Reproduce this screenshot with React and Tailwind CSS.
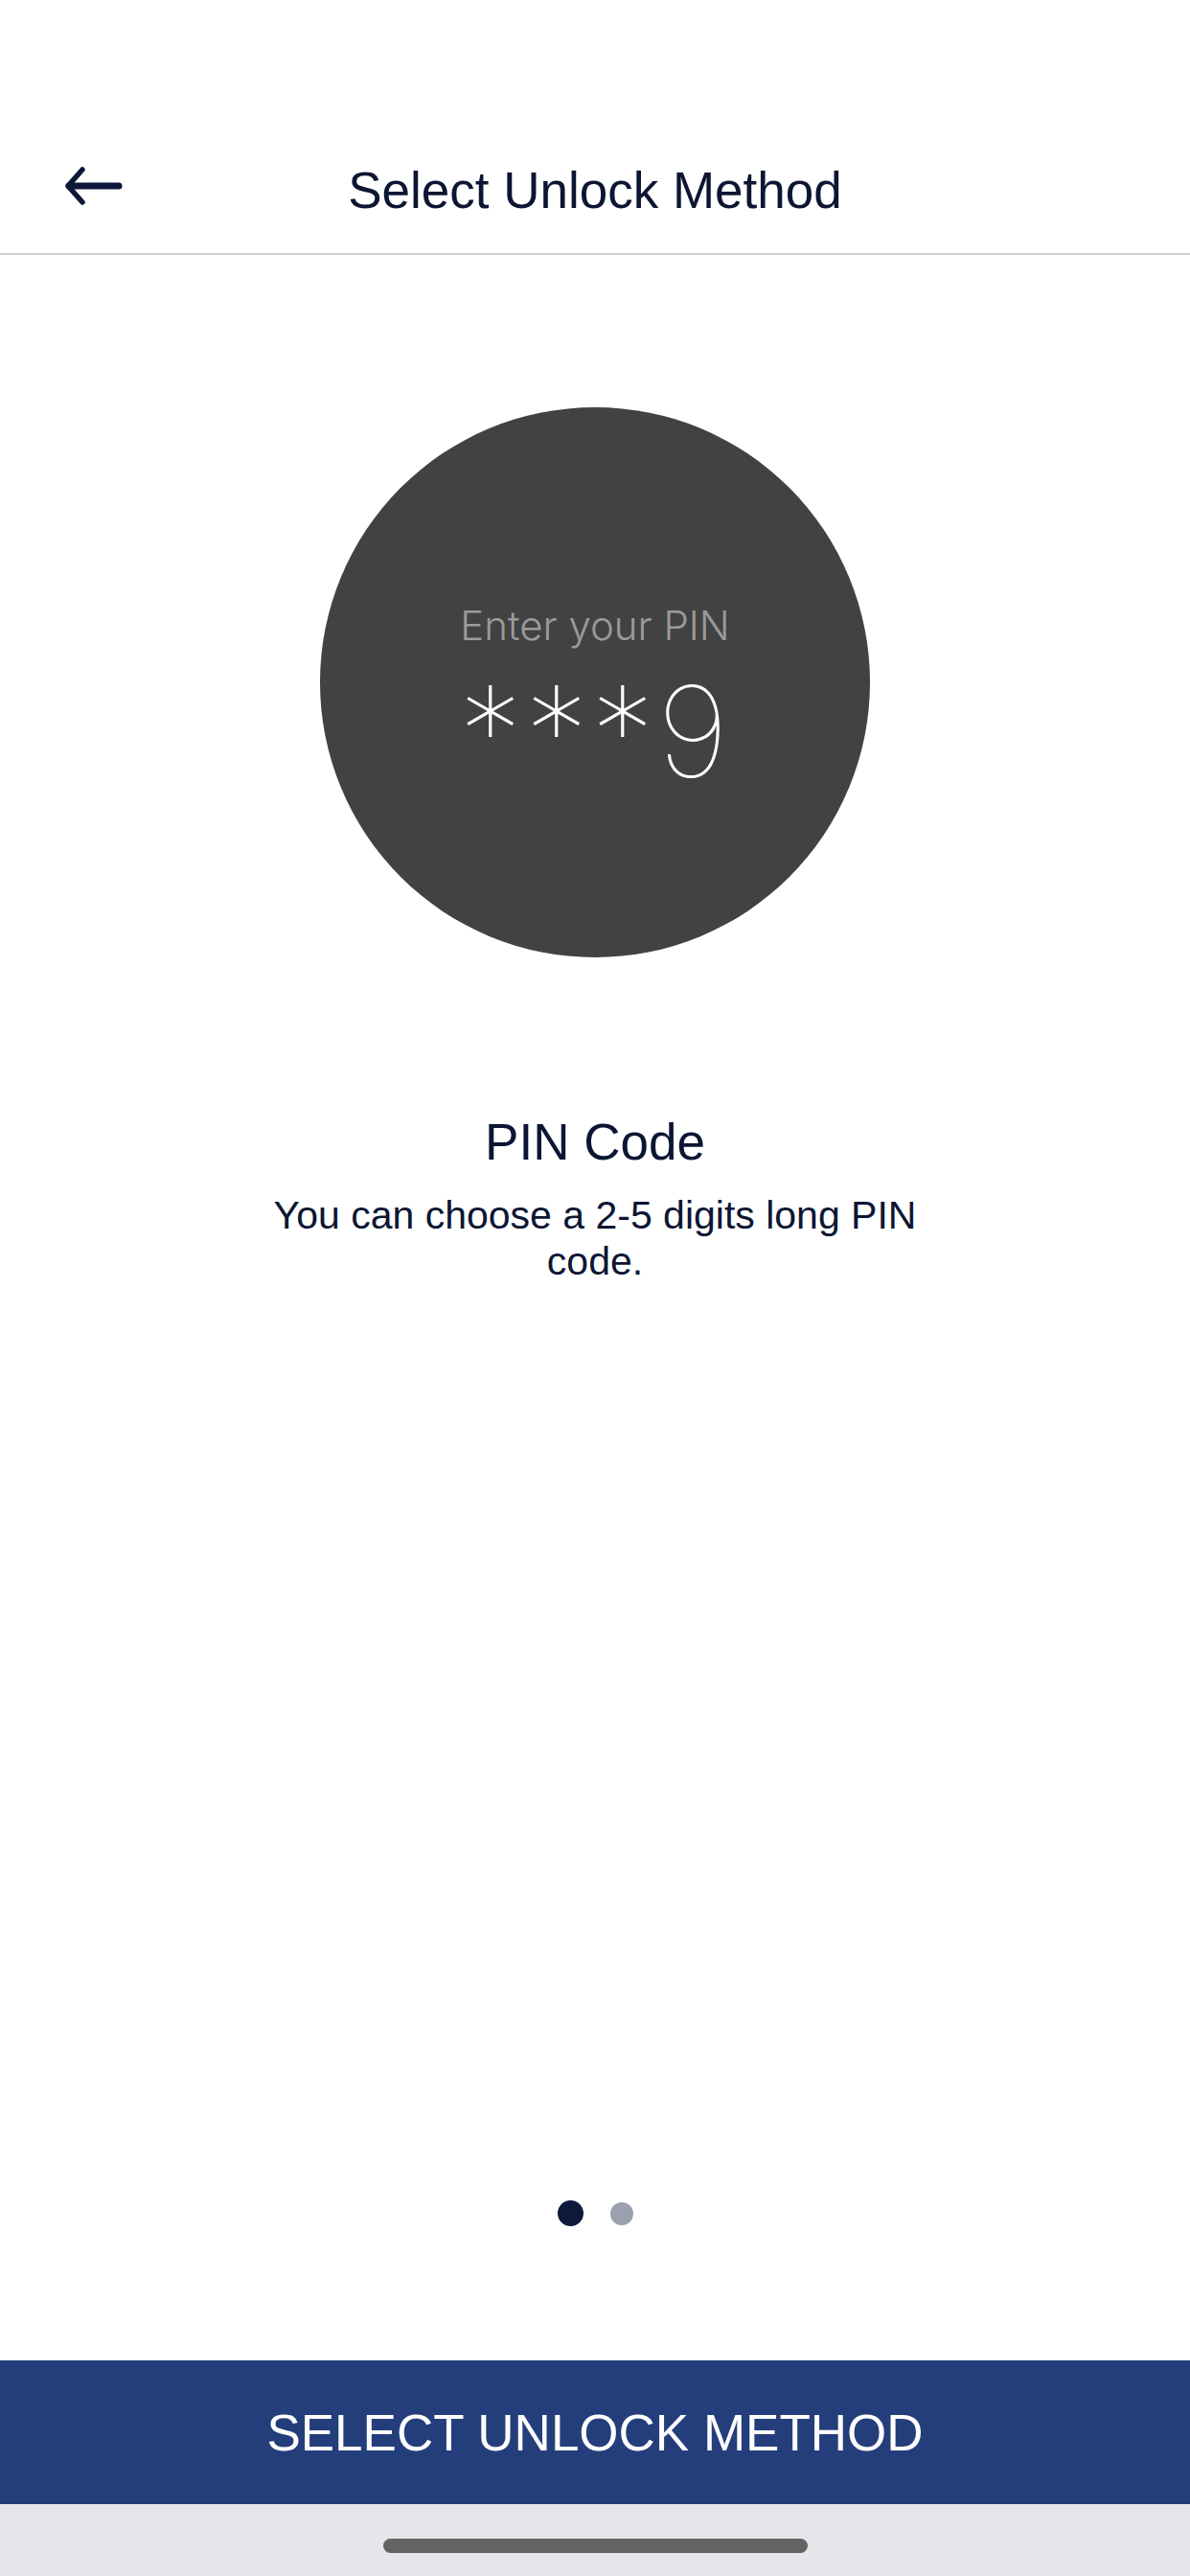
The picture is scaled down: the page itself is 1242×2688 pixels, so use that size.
import React from "react";

const BackArrow = () => (
  <svg width="62" height="42" viewBox="0 0 62 42" fill="none">
    <path
      d="M58 21 H6"
      stroke="#0d1838"
      strokeWidth="7"
      strokeLinecap="round"
    />
    <path
      d="M20 4 L5 21 L20 38"
      stroke="#0d1838"
      strokeWidth="5.5"
      strokeLinecap="round"
      strokeLinejoin="round"
    />
  </svg>
);

const PinCircle = () => (
  <div className="w-[574px] h-[574px] rounded-full bg-[#424242] flex flex-col items-center pt-[202px] font-['Inter',sans-serif]">
    <div className="text-[42px] leading-[52px] font-light text-[#9a9a9a]">
      Enter your PIN
    </div>
    <div className="mt-[18px] text-[132px] leading-none font-thin text-white tracking-[3px]">
      ***9
    </div>
  </div>
);

const PageDots = () => (
  <div className="flex items-center justify-center gap-[28px]">
    <div className="w-[27px] h-[27px] rounded-full bg-[#0e1a3c]" />
    <div className="w-[24px] h-[24px] rounded-full bg-[#9aa0ae]" />
  </div>
);

export default function App() {
  return (
    <div className="w-[1242px] h-[2688px] bg-white flex flex-col font-['Liberation_Sans',Arial,sans-serif] text-[#0c1633]">
      <header className="pt-[134px] border-b-2 border-[#d0d0d0]">
        <div className="relative h-[130px] flex items-center justify-center">
          <div className="absolute left-[66px] top-[39px]">
            <BackArrow />
          </div>
          <h1 className="text-[53px] leading-[62px]">Select Unlock Method</h1>
        </div>
      </header>

      <main className="flex-1 flex flex-col items-center">
        <div className="mt-[159px]">
          <PinCircle />
        </div>
        <div className="mt-[162px] text-[53px] leading-[62px]">PIN Code</div>
        <p className="mt-[21px] w-[730px] text-center text-[41px] leading-[48px]">
          You can choose a 2-5 digits long PIN code.
        </p>
        <div className="flex-1" />
        <div className="mb-[140px]">
          <PageDots />
        </div>
      </main>

      <button className="h-[150px] w-full bg-[#243e7c] text-white text-[53px] leading-none">
        SELECT UNLOCK METHOD
      </button>
      <div className="h-[75px] bg-[#e5e6ea] flex items-start justify-center pt-[36px]">
        <div className="w-[443px] h-[15px] rounded-full bg-[#636363]" />
      </div>
    </div>
  );
}
